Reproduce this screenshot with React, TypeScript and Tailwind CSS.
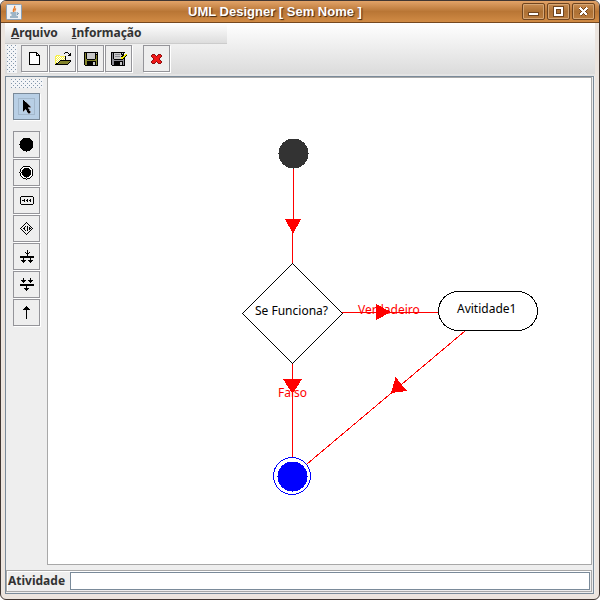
import React from "react";

const colors: Record<string, string> = {
  k: "#000000",
  w: "#ffffff",
  y: "#f6f04a",
  o: "#84842b",
  g: "#c8c8c8",
  d: "#8a8a92",
  Y: "#f5ee00",
  r: "#f01818",
  m: "#8d1010",
};

function PixelIcon({ rows }: { rows: string[] }) {
  const width = Math.max(...rows.map((row) => row.length));
  return (
    <svg width={width} height={rows.length} shapeRendering="crispEdges" aria-hidden="true">
      {rows.flatMap((row, y) =>
        row.split("").map((c, x) =>
          colors[c] ? <rect key={`${x}-${y}`} x={x} y={y} width="1" height="1" fill={colors[c]} /> : null
        )
      )}
    </svg>
  );
}

const newFile = [
  "kkkkkkkk...",
  "kwwwwwwkk..",
  "kwwwwwwkwk.",
  "kwwwwwwkkkk",
  "kwwwwwwwwwk",
  "kwwwwwwwwwk",
  "kwwwwwwwwwk",
  "kwwwwwwwwwk",
  "kwwwwwwwwwk",
  "kwwwwwwwwwk",
  "kwwwwwwwwwk",
  "kwwwwwwwwwk",
  "kkkkkkkkkkk",
];
const openFile = [
  "..........kkk...",
  ".........k...k.k",
  "..............kk",
  ".yyyy........kkk",
  "yywywyyyyyk.....",
  "ywywywywywk.....",
  "yywywywywyk.....",
  "ywywywywywk.....",
  "yywywkkkkkkkkkkk",
  "ywywkooooooooook",
  "yywkooooooooook.",
  "ykkooooooooook..",
  "kkkkkkkkkkkkk...",
];
const saveFile = [
  "kkkkkkkkkkkkkk",
  "kokggggggggkgk",
  "kokggggggggkkk",
  "kokggggggggkok",
  "kokggggggggkok",
  "kokggggggggkok",
  "kokggggggggkok",
  "kookkkkkkkkook",
  "kooooooooooook",
  "kookkkkkkkkkok",
  "kookkkkkkggkok",
  "kookkkkkkggkok",
  "kookkkkkkggkok",
  ".kkkkkkkkkkkkk",
];
const saveAs = [
  "kkkkkkkkkkkkkk..",
  "kdkgggggggkgk...",
  "kdkgdddddgkkk.YY",
  "kdkggggggggkkYYk",
  "kdkgdddddgkkYYk.",
  "kdkgggggggYYYk..",
  "kdkgggggggYYkk..",
  "kddkkkkkkkkkdk..",
  "kddddddddddddk..",
  "kddkkkkkkkkkdk..",
  "kddkkkkkkggkdk..",
  "kddkkkkkkggkdk..",
  "kddkkkkkkggkdk..",
  ".kkkkkkkkkkkkk..",
];
const removeIcon = [
  ".mmm...mmm.",
  "mrrrm.mrrrm",
  "mrrrrmrrrrm",
  ".mrrrrrrrm.",
  "..mrrrrrm..",
  "..mrrrrrm..",
  ".mrrrrrrrm.",
  "mrrrrmrrrrm",
  "mrrrm.mrrrm",
  ".mmm...mmm.",
];
const pointer = [
  "k.......",
  "kk......",
  "kkkd....",
  "kkkkd...",
  "kkkkkd..",
  "kkkkkkd.",
  "kkkkkkkd",
  "kkkkkddd",
  "kkkkkd..",
  "kkdkkkd.",
  "kd.dkkd.",
  "d...kkkd",
  "....dkkd",
  ".....dd.",
];
const activity = [
  ".kkkkkkkkkkkk.",
  "k............k",
  "k............k",
  "k...k..k..k..k",
  "k.kkk.kk.kk..k",
  "k...k..k..k..k",
  "k............k",
  "k............k",
  ".kkkkkkkkkkkk.",
];
const decision = [
  "......k......",
  ".....k.k.....",
  "....k...k....",
  "...k.....k...",
  "..k..k.k..k..",
  ".k..k..k.k.k.",
  "k..kk..k.kk.k",
  ".k..k..k.k.k.",
  "..k..k.k..k..",
  "...k.....k...",
  "....k...k....",
  ".....k.k.....",
  "......k......",
];
const fork = [
  ".......k......",
  ".......k......",
  ".....k.k.k....",
  "......kkk.....",
  ".......k......",
  ".......k......",
  "kkkkkkkkkkkkkk",
  "kkkkkkkkkkkkkk",
  "...k......k...",
  "...k......k...",
  ".kkkkk..kkkkk.",
  "..kkk....kkk..",
  "...k......k...",
];
const join = [
  "...k......k...",
  "...k......k...",
  ".kkkkk..kkkkk.",
  "..kkk....kkk..",
  "...k......k...",
  "..............",
  "kkkkkkkkkkkkkk",
  "kkkkkkkkkkkkkk",
  "......k.......",
  "......k.......",
  "....kkkkk.....",
  ".....kkk......",
  "......k.......",
];
const arrow = [
  "...k...",
  "..kkk..",
  ".kkkkk.",
  "kkkkkkk",
  "...k...",
  "...k...",
  "...k...",
  "...k...",
  "...k...",
  "...k...",
  "...k...",
  "...k...",
  "...k...",
];

function ToolButton({ label, selected = false, children }: { label: string; selected?: boolean; children: React.ReactNode }) {
  return (
    <button
      aria-label={label}
      aria-pressed={selected}
      className={`relative flex h-[27px] w-[27px] shrink-0 items-center justify-center border shadow-[1px_1px_0_#ffffff] ${
        selected ? "border-[#7a8a99] bg-[#b8cfe5]" : "border-[#949499] bg-[#eeeeee]"
      }`}
    >
      {selected && <span className="absolute inset-1 border border-[#a3b8cc]" />}
      <span className="relative">{children}</span>
    </button>
  );
}

function Grip({ id, className }: { id: string; className: string }) {
  return (
    <svg className={className} shapeRendering="crispEdges" aria-hidden="true">
      <pattern id={id} width="4" height="4" patternUnits="userSpaceOnUse">
        <rect width="4" height="4" fill="#f4f5f7" />
        <rect width="1" height="1" fill="#8296ab" />
        <rect x="2" y="2" width="1" height="1" fill="#8296ab" />
      </pattern>
      <rect width="100%" height="100%" fill={`url(#${id})`} />
    </svg>
  );
}

function WindowButton({ label, children }: { label: string; children: React.ReactNode }) {
  return (
    <button
      aria-label={label}
      className="flex h-[17px] w-[23px] items-center justify-center rounded-xs border border-[#70451f] bg-linear-to-b from-[#c98d52] via-[#ad7134] to-[#bb7d3f] shadow-[inset_0_0_0_1px_#d6a674]"
    >
      <svg width="11" height="11" shapeRendering="crispEdges" aria-hidden="true">
        {children}
      </svg>
    </button>
  );
}

function Diagram() {
  return (
    <svg
      viewBox="48 78 543 486"
      className="block h-[486px] w-[543px] shrink-0 font-['Noto_Sans',sans-serif] text-xs"
      shapeRendering="crispEdges"
      role="img"
      aria-label="Diagrama de atividades"
    >
      <g stroke="#ff0000" fill="none">
        <path d="M293.5 168V220" />
        <path d="M292.5 233V264M342 312.5H438M292.5 363V458" />
        <path d="M465 331L307 464" />
      </g>
      <g fill="#ff0000">
        <path d="M285 219H301L293 234Z" />
        <path d="M376 304L391 312L376 320Z" />
        <path d="M283 379H302L292.5 394Z" />
        <path d="M395.5 377L407 391L391 393Z" />
      </g>
      <circle cx="293.5" cy="153.5" r="15" fill="#333333" />
      <path d="M292.5 263.5L342.5 313.5L292.5 363.5L242.5 313.5Z" fill="none" stroke="#000000" />
      <rect x="438.5" y="291.5" width="99" height="39" rx="20" fill="#ffffff" stroke="#000000" />
      <circle cx="292" cy="476" r="18.5" fill="#ffffff" stroke="#0000ff" />
      <circle cx="292.5" cy="476.5" r="15" fill="#0000ff" />
      <text x="255" y="315">Se Funciona?</text>
      <text x="457" y="313">Avitidade1</text>
      <text x="358" y="314" fill="#ff0000">Verdadeiro</text>
      <text x="278" y="397" fill="#ff0000">Falso</text>
    </svg>
  );
}

export default function App() {
  return (
    <div className="flex min-h-screen flex-col overflow-hidden rounded-md border border-[#403632] bg-[#ece5df] font-['Noto_Sans',sans-serif] text-xs text-[#333333]">
      <header className="flex h-[22px] shrink-0 items-center border-b border-[#75481f] bg-linear-to-b from-[#e2a368] via-[#b97635] to-[#d18b45] pr-1 pl-[5px]">
        <svg width="16" height="16" viewBox="0 0 16 16" aria-hidden="true">
          <rect x="0.5" y="0.5" width="15" height="15" rx="1" fill="#eef1f4" stroke="#8aa0b6" />
          <path d="M8.5 2C10 4 6 5 7.5 8M10 4.500C8.500 5.500 8.500 6 9 7.500" fill="none" stroke="#e87722" strokeWidth="1.3" />
          <path d="M4.500 9H10.500M5.500 11H10M4 13H12M11 9C13 8.500 12.500 10.500 10.500 11" fill="none" stroke="#4d7898" />
        </svg>
        <h1 className="flex-1 pl-1.5 text-center font-['Liberation_Sans',sans-serif] text-[13px] leading-5 font-bold text-white [text-shadow:1px_1px_1px_#3d2410]">
          UML Designer [ Sem Nome ]
        </h1>
        <div className="flex gap-0.5">
          <WindowButton label="Minimizar">
            <rect x="0" y="6" width="11" height="4" fill="#70451f" />
            <rect x="1" y="7" width="9" height="2" fill="#ffffff" />
          </WindowButton>
          <WindowButton label="Maximizar">
            <path d="M2 2H9V9H2Z" fill="none" stroke="#70451f" strokeWidth="4" />
            <path d="M2 2H9V9H2Z" fill="none" stroke="#ffffff" strokeWidth="2" />
          </WindowButton>
          <WindowButton label="Fechar">
            <path d="M2 2L9 9M9 2L2 9" stroke="#70451f" strokeWidth="4" />
            <path d="M2 2L9 9M9 2L2 9" stroke="#ffffff" strokeWidth="2" />
          </WindowButton>
        </div>
      </header>

      <div className="mx-1 mb-[5px] flex flex-1 flex-col bg-[#eeeeee]">
        <div className="bg-linear-to-b from-white to-[#dadada]">
          <nav className="flex h-[21px] w-[222px] items-start border-b border-[#cccccc] bg-linear-to-b from-white to-[#dddddd] pl-1.5 font-bold">
            <button className="mr-3.5 leading-5">
              <span className="underline">A</span>rquivo
            </button>
            <button className="leading-5">
              <span className="underline">I</span>nformação
            </button>
          </nav>
          <div className="flex h-8 items-start gap-px border-b-2 border-[#e4e4e4] pt-px pl-0.5">
            <Grip id="toolbar-grip" className="mr-[3px] h-7 w-2.5" />
            <ToolButton label="Novo"><PixelIcon rows={newFile} /></ToolButton>
            <ToolButton label="Abrir"><PixelIcon rows={openFile} /></ToolButton>
            <ToolButton label="Salvar"><PixelIcon rows={saveFile} /></ToolButton>
            <ToolButton label="Salvar como"><PixelIcon rows={saveAs} /></ToolButton>
            <div className="w-[9px]" />
            <ToolButton label="Excluir"><PixelIcon rows={removeIcon} /></ToolButton>
          </div>
        </div>

        <div className="mr-px flex flex-1 flex-col border border-[#7a8a99]">
          <main className="flex flex-1">
            <aside className="flex w-[41px] shrink-0 flex-col items-center gap-px pt-0.5">
              <Grip id="palette-grip" className="mb-1 h-[9px] w-8" />
              <ToolButton label="Selecionar" selected><PixelIcon rows={pointer} /></ToolButton>
              <div className="h-[9px]" />
              <ToolButton label="Início">
                <svg width="15" height="15" shapeRendering="crispEdges"><circle cx="7.5" cy="7.5" r="7" /></svg>
              </ToolButton>
              <ToolButton label="Fim">
                <svg width="15" height="15" shapeRendering="crispEdges">
                  <circle cx="7.5" cy="7.5" r="6.5" fill="#ffffff" stroke="#000000" />
                  <circle cx="7.5" cy="7.5" r="5" />
                </svg>
              </ToolButton>
              <ToolButton label="Atividade"><PixelIcon rows={activity} /></ToolButton>
              <ToolButton label="Decisão"><PixelIcon rows={decision} /></ToolButton>
              <ToolButton label="Separação"><PixelIcon rows={fork} /></ToolButton>
              <ToolButton label="Junção"><PixelIcon rows={join} /></ToolButton>
              <ToolButton label="Transição"><PixelIcon rows={arrow} /></ToolButton>
            </aside>
            <section className="mr-px flex min-w-0 flex-1 overflow-hidden border border-[#a8a8a8] bg-white">
              <Diagram />
            </section>
          </main>
          <footer className="mt-[5px] mr-px mb-px flex h-[22px] shrink-0 items-center border border-[#a8a8a8] px-px shadow-[inset_1px_1px_0_#ffffff]">
            <label htmlFor="atividade" className="mr-[5px] font-bold">Atividade</label>
            <input id="atividade" type="text" className="h-[18px] min-w-0 flex-1 border border-[#7a8a99] bg-white px-1 outline-none" />
          </footer>
        </div>
      </div>
    </div>
  );
}
